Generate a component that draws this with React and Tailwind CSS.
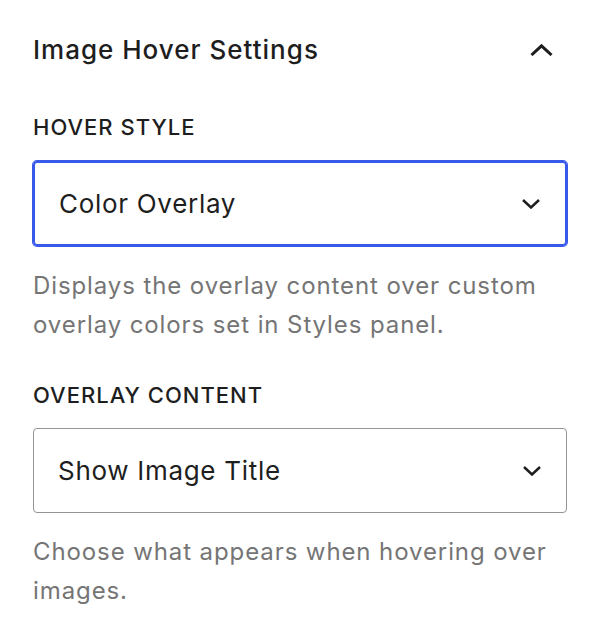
import React from 'react'

const font = { fontFamily: 'Inter, "Noto Sans", sans-serif' }

const ChevronDown = () => (
  <svg width="18" height="10" viewBox="0 0 18 10" fill="none">
    <polyline points="1,1 9,8.5 17,1" stroke="#1e1e1e" strokeWidth="2.5" />
  </svg>
)

const ChevronUp = () => (
  <svg width="23" height="12" viewBox="0 0 23 12" fill="none">
    <polyline points="1.5,11 11.5,1.8 21.5,11" stroke="#1e1e1e" strokeWidth="3" />
  </svg>
)

// Fake select control in the settings panel
const SelectBox = ({ value, focused }) => (
  <div
    className={`flex items-center justify-between h-[85px] rounded-[4px] pl-[24px] pr-[25px] ${
      focused
        ? 'border-2 border-[#3858e9] shadow-[0_0_0_1px_#3858e9]'
        : 'border-[1.5px] border-[#949494]'
    }`}
  >
    <span className="text-[26px] leading-[32px] tracking-[0.7px] text-[#1e1e1e]">{value}</span>
    <ChevronDown />
  </div>
)

const Label = ({ children, className = '' }) => (
  <div className={`text-[22px] leading-[28px] tracking-[1px] font-medium uppercase text-[#1e1e1e] ${className}`}>
    {children}
  </div>
)

const Help = ({ children, className = '' }) => (
  <p className={`text-[24px] leading-[39px] tracking-[0.9px] text-[#757575] ${className}`}>{children}</p>
)

export default function App() {
  return (
    <div className="w-[600px] h-[639px] bg-white px-[33px] pt-[34px]" style={font}>
      {/* Panel header */}
      <div className="flex items-center justify-between">
        <h2 className="text-[26px] leading-[32px] tracking-[1px] font-medium text-[#1e1e1e]">
          Image Hover Settings
        </h2>
        <div className="mr-[14px]">
          <ChevronUp />
        </div>
      </div>

      <Label className="mt-[47px]">Hover Style</Label>
      <div className="mt-[20px]">
        <SelectBox value="Color Overlay" focused />
      </div>
      <Help className="mt-[20px]">
        Displays the overlay content over custom overlay colors set in Styles panel.
      </Help>

      <Label className="mt-[37px]">Overlay Content</Label>
      <div className="mt-[19px]">
        <SelectBox value="Show Image Title" />
      </div>
      <Help className="mt-[19px]">Choose what appears when hovering over images.</Help>
    </div>
  )
}
